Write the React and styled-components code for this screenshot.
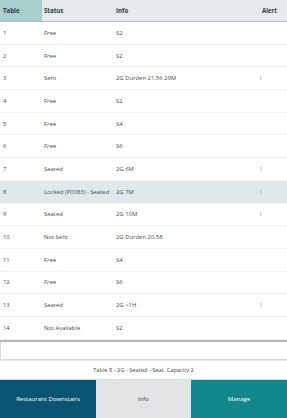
import React from "react";
import styled, { createGlobalStyle } from "styled-components";

const Global = createGlobalStyle`
  html, body { margin: 0; padding: 0; background: #ffffff; }
  body { font-family: "Open Sans", "Noto Sans", sans-serif; }
`;

const Page = styled.div`
  width: 287px;
  height: 418px;
  display: flex;
  flex-direction: column;
  overflow: hidden;
  background: #fff;
`;

const cols = "42px 72px 143px 1fr";

const HeaderRow = styled.div`
  display: grid;
  grid-template-columns: ${cols};
  height: 22px;
  box-sizing: border-box;
  background: #e6eaec;
  border-bottom: 1px solid #b9bdbf;
`;

const HeadCell = styled.div`
  display: flex;
  align-items: center;
  padding-left: ${(p) => (p.$first ? "3px" : "2px")};
  font-size: 6.1px;
  font-weight: 700;
  color: #2e3a3f;
  background: ${(p) => (p.$active ? "#a6cfce" : "transparent")};
`;

const AlertHead = styled(HeadCell)`
  justify-content: flex-end;
  padding-right: 10px;
`;

const Body = styled.div`
  display: flex;
  flex-direction: column;
`;

const Row = styled.div`
  display: grid;
  grid-template-columns: ${cols};
  height: 22.7px;
  box-sizing: border-box;
  border-bottom: 1px solid #f1f3f3;
  background: ${(p) => (p.$selected ? "#dfe8ea" : "#ffffff")};
`;

const Cell = styled.div`
  display: flex;
  align-items: center;
  padding-left: ${(p) => (p.$first ? "3px" : "2px")};
  font-size: 5.9px;
  color: #44494c;
  white-space: nowrap;
`;

const AlertMark = styled.div`
  display: flex;
  align-items: center;
  padding-left: 3px;
  font-size: 5.9px;
  color: #b0508a;
`;

const Divider = styled.div`
  height: 2px;
  background: #b3b8b9;
`;

const EmptyBox = styled.div`
  height: 18px;
  box-sizing: border-box;
  border-left: 1px solid #d6dadb;
  border-bottom: 1px solid #d6dadb;
  background: #fff;
`;

const StatusBar = styled.div`
  height: 19px;
  box-sizing: border-box;
  display: flex;
  align-items: center;
  justify-content: center;
  border-top: 1px solid #e4e7e9;
  font-size: 5.7px;
  color: #44494c;
  background: #fff;
`;

const ButtonBar = styled.div`
  flex: 1;
  display: grid;
  grid-template-columns: 96px 95px 1fr;
  border-top: 1px solid #d8dcdd;
`;

const Btn = styled.div`
  display: flex;
  align-items: center;
  justify-content: center;
  font-size: 6px;
  color: ${(p) => p.$fg};
  background: ${(p) => p.$bg};
`;

const rows = [
  ["1", "Free", "S2", ""],
  ["2", "Free", "S2", ""],
  ["3", "Sent", "2G Durden 21.56 29M", "!"],
  ["4", "Free", "S2", ""],
  ["5", "Free", "S4", ""],
  ["6", "Free", "S6", ""],
  ["7", "Seated", "2G 6M", "!"],
  ["8", "Locked (P0083) - Seated", "2G 7M", "!"],
  ["9", "Seated", "2G 10M", "!"],
  ["10", "Not Sent", "2G Durden 20.58", ""],
  ["11", "Free", "S4", ""],
  ["12", "Free", "S6", ""],
  ["13", "Seated", "2G >1H", "!"],
  ["14", "Not Available", "S2", ""],
];

export default function App() {
  return (
    <Page>
      <Global />
      <HeaderRow>
        <HeadCell $first $active>Table</HeadCell>
        <HeadCell>Status</HeadCell>
        <HeadCell>Info</HeadCell>
        <AlertHead>Alert</AlertHead>
      </HeaderRow>
      <Body>
        {rows.map((r) => (
          <Row key={r[0]} $selected={r[0] === "8"}>
            <Cell $first>{r[0]}</Cell>
            <Cell>{r[1]}</Cell>
            <Cell>{r[2]}</Cell>
            <AlertMark>{r[3]}</AlertMark>
          </Row>
        ))}
      </Body>
      <Divider />
      <EmptyBox />
      <StatusBar>Table 8 - 2G - Seated - Seat. Capacity 2</StatusBar>
      <ButtonBar>
        <Btn $bg="#0b5574" $fg="#ffffff">Restaurant Downstairs</Btn>
        <Btn $bg="#e3e4e6" $fg="#3a3f42">Info</Btn>
        <Btn $bg="#12878b" $fg="#ffffff">Manage</Btn>
      </ButtonBar>
    </Page>
  );
}
